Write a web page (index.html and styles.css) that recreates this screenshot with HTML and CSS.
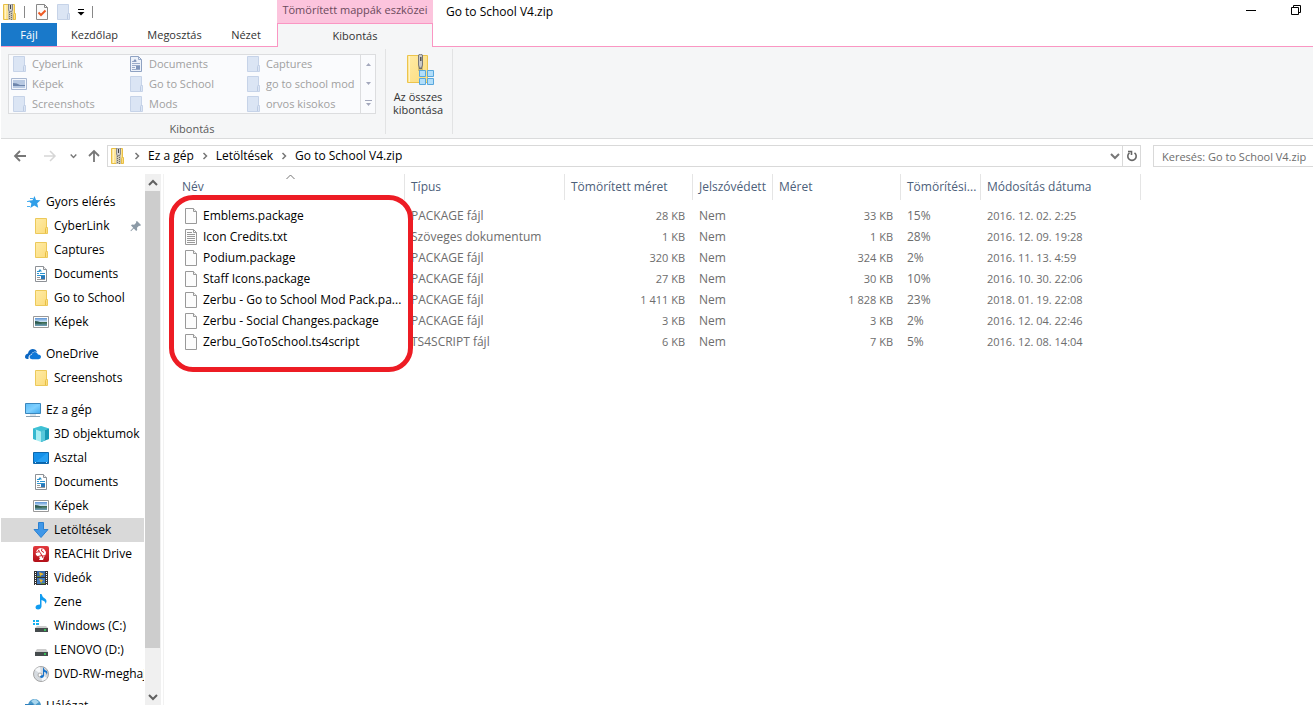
FILE: index.html
```html
<!DOCTYPE html>
<html lang="hu">
<head>
<meta charset="utf-8">
<title>Go to School V4.zip</title>
<link rel="stylesheet" href="styles.css">
</head>
<body>
<svg class="sprite" aria-hidden="true">
  <defs>
    <linearGradient id="g-folder" x1="0" y1="0" x2="1" y2="1"><stop offset="0" stop-color="#ffeba6"/><stop offset="1" stop-color="#fbdc7c"/></linearGradient>
    <linearGradient id="g-screen" x1="0" y1="0" x2="1" y2="1"><stop offset="0" stop-color="#5cbcf7"/><stop offset=".5" stop-color="#7fd0ff"/><stop offset="1" stop-color="#3ea9ee"/></linearGradient>
    <linearGradient id="g-photo" x1="0" y1="0" x2="0" y2="1"><stop offset="0" stop-color="#5b93d6"/><stop offset=".5" stop-color="#d5e8f5"/><stop offset=".55" stop-color="#3d6a4c"/><stop offset="1" stop-color="#6f9fc0"/></linearGradient>
    <linearGradient id="g-red" x1="0" y1="0" x2="0" y2="1"><stop offset="0" stop-color="#e33a3e"/><stop offset="1" stop-color="#b20f18"/></linearGradient>
  </defs>
  <symbol id="folder" viewBox="0 0 16 16"><path d="M2.500.5h11v9h1v6h-12z" fill="url(#g-folder)" stroke="#ecc95a"/><path d="M12.500 15v-4.500l1-1.500" fill="none" stroke="#e8bf45"/></symbol>
  <symbol id="folder-dim" viewBox="0 0 16 16"><path d="M2.500.5h11v9h1v6h-12z" fill="#dbe5f4" stroke="#c6d3e8"/><path d="M12.500 15v-4.500l1-1.500" fill="none" stroke="#bccbe3"/></symbol>
  <symbol id="zip" viewBox="0 0 16 16"><path d="M1.500.5h11v9h1v6h-12z" fill="url(#g-folder)" stroke="#e8bf45"/><path d="M3.500 1v14" stroke="#fff3c8"/><path d="M11.500 15v-4.500l1-1.500" fill="none" stroke="#e8bf45"/><path d="M6 0h5v16h-5z" fill="#c9c3ae"/><path d="M7.500 6v10" stroke="#6e6e6e" stroke-dasharray="1 1"/><path d="M9.500 7v9" stroke="#6e6e6e" stroke-dasharray="1 1"/><path d="M6.500 0h4v6l-1 1.500h-2l-1-1.500z" fill="#d0d0d0" stroke="#8a8a8a"/><path d="M8 1h1v4h-1z" fill="#444"/></symbol>
  <symbol id="check-doc" viewBox="0 0 14 16"><path d="M1.500.5h8l3 3v12h-11z" fill="#fafafa" stroke="#888"/><path d="M9.500.5v3h3" fill="none" stroke="#888"/><path d="M3.500 8.500l2.500 2.500 4.500-4.500" fill="none" stroke="#ee5a24" stroke-width="2"/></symbol>
  <symbol id="doc" viewBox="0 0 16 16"><path d="M2.500.5h8l3 3v12h-11z" fill="#fff" stroke="#8d9196"/><path d="M10.500.5v3h3" fill="#eee" stroke="#8d9196"/><path d="M4 5.500h3M4 7.500h2M7 7.500h5M4 9.500h8" stroke="#2c93cf"/><path d="M7 3l2 2.500h-4z" fill="#2c93cf"/><path d="M4 11.500h3M4 13.500h8" stroke="#999"/><path d="M8 10h4v3h-4z" fill="#2b78b8"/></symbol>
  <symbol id="doc-dim" viewBox="0 0 16 16"><path d="M2.500.5h8l3 3v12h-11z" fill="#edf2fa" stroke="#8fa2c2"/><path d="M10.500.5v3h3M4 5.500h4M4 7.500h8M4 9.500h8M4 11.500h3M4 13.500h8" fill="none" stroke="#9aabc9"/><path d="M7 3l2 2.500h-4zM8 10h4v3h-4z" fill="#7f95bb"/></symbol>
  <symbol id="photo" viewBox="0 0 16 16"><path d="M.5 2.500h15v11h-15z" fill="#fff" stroke="#999"/><path d="M2 4h12v8h-12z" fill="url(#g-photo)"/><path d="M2 7q5 0 7 2.500h-7z" fill="#2c5a50"/></symbol>
  <symbol id="photo-dim" viewBox="0 0 16 16"><path d="M.5 2.500h15v11h-15z" fill="#f2f6fc" stroke="#a9b8d2"/><path d="M2 4h12v8h-12z" fill="#b8c9e2"/><path d="M2 7q4 0 7 2h5v1h-12z" fill="#6e86ac"/></symbol>
  <symbol id="star" viewBox="0 0 16 16"><path d="M9.500 2l1.500 4 4.500.3-3.300 3 1 4.500-3.900-2.300-4 2.500 1.100-4.500-3.200-2.700 4.300-.5z" fill="#2f9ee8"/><path d="M2 7.500h3M2 12.500h3M5 4.500h3" stroke="#4db0f0"/></symbol>
  <symbol id="cloud" viewBox="0 0 16 16"><path d="M0 11q0-3 3-3.500.5-4 4.500-4.500 3.500 0 4.500 3-4-1.500-6 2.500-3 .5-2.500 4.500-3.500 0-3.500-2z" fill="#0a66c2"/><path d="M4.500 11q0-2 2.200-2.300.5-2.700 3.300-2.700 2.300 0 3 2.500 3 .2 3 2.500 0 2-2.500 2.200h-6.500q-2.500-.2-2.500-2.200z" fill="#0f78d8"/></symbol>
  <symbol id="pc" viewBox="0 0 16 16"><path d="M.5 1.500h15v10h-15z" fill="url(#g-screen)" stroke="#3b87bd"/><path d="M5 12h6v2h-6z" fill="#d8e4ec"/><path d="M1 14.500h14" stroke="#8ba0b0"/></symbol>
  <symbol id="cube" viewBox="0 0 16 16"><path d="M8 0l8 2.500v10.500l-8 3-8-3v-10.500z" fill="#a8edf2"/><path d="M0 2.500l3 1v10.500l-3-1z" fill="#35b8cf"/><path d="M8 0l8 2.500-8 3-8-3z" fill="#3fc0d4"/><path d="M8 5.500l8-3v10.500l-8 3z" fill="#1799b5"/><path d="M8 5.500l4-1.500v10.500l-4 1.500z" fill="#57c8db"/></symbol>
  <symbol id="desktop" viewBox="0 0 16 16"><path d="M.5 2.500h15v11h-15z" fill="#1591ea" stroke="#0d68ae"/><path d="M3 12l11-9h1v9z" fill="#27a0f2"/><path d="M1 12.500h14" stroke="#0865ad"/><path d="M2 12.500h1M13 12.500h1" stroke="#cfe8fb"/></symbol>
  <symbol id="down" viewBox="0 0 16 16"><path d="M5.500.5h5v7h4.500l-7 8-7-8h4.500z" fill="#3f97e8" stroke="#2b80d0"/></symbol>
  <symbol id="reach" viewBox="0 0 16 16"><path d="M2 0h12q2 0 2 2v12q0 2-2 2h-12q-2 0-2-2v-12q0-2 2-2z" fill="url(#g-red)"/><path d="M5 3q3-2 6 0l2 3q.5 3-2 5l-1 3h-4l1-2-4-3q-1-3 2-6z" fill="#fff"/><path d="M3 6.500q4-2 5 1.500t5 1M9 2.500q-2 3 2 4M5 10.500l4-1 1 2.500M5 4l2 1.500" fill="none" stroke="#d02027"/></symbol>
  <symbol id="film" viewBox="0 0 16 16"><path d="M1 1h14v14h-14z" fill="#333"/><path d="M2.500 2v13M13.500 2v13" stroke="#fff" stroke-dasharray="1 1"/><path d="M4 1h8v6h-8z" fill="#3569ad"/><path d="M4 8h8v6h-8z" fill="#427abb"/><path d="M6 2l5 2-4 2zM6 9l4 1-2 3z" fill="#e9b42d"/><path d="M4 6h4v1h-4zM8 13h4v1h-4z" fill="#609241"/></symbol>
  <symbol id="note" viewBox="0 0 16 16"><path d="M7 0h1.500q.5 3 4 5 2 2 0 5 .2-3-4-4v6.500q-.5 3-3.500 3-2.500 0-2.500-2 0-3 4.500-3z" fill="#119cf0"/></symbol>
  <symbol id="drive" viewBox="0 0 16 16"><path d="M4 7h9l2 3h-13z" fill="#ccc"/><path d="M2 10h13v4h-13z" fill="#454b4d"/><path d="M11 12h2" stroke="#35e35d" stroke-width="1.500"/></symbol>
  <symbol id="drive-win" viewBox="0 0 16 16"><path d="M4 8h9l2 2h-13z" fill="#ccc"/><path d="M2 10h13v4h-13z" fill="#454b4d"/><path d="M11 12h2" stroke="#35e35d" stroke-width="1.500"/><path d="M0 2h2v2h-2zM3 2h3v2h-3zM0 5h2v2h-2zM3 5h3v2h-3z" fill="#16b1f0"/></symbol>
  <symbol id="disc" viewBox="0 0 16 16"><circle cx="8" cy="8" r="7.500" fill="#d6dbe0" stroke="#a5a5a5"/><path d="M8 8l-6-4q2-3 5-3zM8 8l6 4q-2 3-5 3z" fill="#f6f8fa"/><circle cx="7" cy="9" r="2" fill="#fff" stroke="#aaa"/><path d="M10 1q1 3 4 4 1 2-.5 4 .2-3-2.500-3v4q-.5 2-2.500 2-1.500-.2-1.500-1.500.5-1.500 3-1.500z" fill="#1773cb"/></symbol>
  <symbol id="net" viewBox="0 0 16 16"><circle cx="9.500" cy="7.500" r="6.500" fill="#4a98c8"/><path d="M6 3l4-2 4 3-4 3z" fill="#a9d6ee"/><path d="M0 6h8v6h-8z" fill="#2f80bd"/></symbol>
  <symbol id="file" viewBox="0 0 14 16"><path d="M1.500.5h8l3 3v12h-11z" fill="#fcfcfc" stroke="#999"/><path d="M9.500.5v3h3" fill="#eee" stroke="#999"/></symbol>
  <symbol id="text-file" viewBox="0 0 14 16"><path d="M1.500.5h8l3 3v12h-11z" fill="#fcfcfc" stroke="#999"/><path d="M9.500.5v3h3M3 3.500h5M3 5.500h8M3 7.500h8M3 9.500h8M3 11.500h8M3 13.500h8" fill="none" stroke="#999"/></symbol>
  <symbol id="pin" viewBox="0 0 12 12"><path d="M7 1l4 4-1 1-1-.3-2 2 .2 2.300-1 1-2.400-2.500-2.800 2.800-.6-.6 2.800-2.900-2.200-2.300 1-1 2.200.2 2-2-.3-1z" fill="#8c9aa6"/></symbol>
  <symbol id="chev" viewBox="0 0 8 8"><path d="M2.500 1l3 3-3 3" fill="none" stroke="#777" stroke-width="1.500"/></symbol>
  <symbol id="chev-down" viewBox="0 0 10 8"><path d="M1 2l4 4 4-4" fill="none" stroke="currentColor" stroke-width="2"/></symbol>
  <symbol id="chev-up" viewBox="0 0 10 8"><path d="M1 6l4-4 4 4" fill="none" stroke="currentColor" stroke-width="2"/></symbol>
</svg>

<header class="top">
  <div class="top-left">
    <div class="quick">
      <svg class="i16"><use href="#zip"/></svg>
      <span class="bar"></span>
      <button class="plain" aria-label="Tulajdonságok"><svg class="i14"><use href="#check-doc"/></svg></button>
      <button class="plain" aria-label="Új mappa"><svg class="i16"><use href="#folder-dim"/></svg></button>
      <button class="plain" aria-label="Gyorselérési eszköztár"><svg width="8" height="8" viewBox="0 0 8 8"><path d="M1 1.500h6" stroke="#000"/><path d="M.5 4h7L4 7.500z"/></svg></button>
      <span class="bar"></span>
    </div>
    <nav class="tabs">
      <button class="tab tab-file">Fájl</button>
      <button class="tab tab-home">Kezdőlap</button>
      <button class="tab tab-share">Megosztás</button>
      <button class="tab tab-view">Nézet</button>
    </nav>
  </div>
  <div class="context">
    <div class="context-title">Tömörített mappák eszközei</div>
    <button class="context-tab">Kibontás</button>
  </div>
  <div class="title-area">
    <h1 class="title">Go to School V4.zip</h1>
    <div class="window-buttons">
      <button class="plain" aria-label="Kis méret"><svg width="12" height="12" viewBox="0 0 12 12"><path d="M1 6.500h10" stroke="#000"/></svg></button>
      <button class="plain" aria-label="Előző méret"><svg width="12" height="12" viewBox="0 0 12 12"><path d="M1.500 3.500h7v7h-7zM3.500 3v-1.500h7v7h-2" fill="none" stroke="#000"/></svg></button>
    </div>
  </div>
</header>

<section class="ribbon">
  <div class="group group-extract">
    <div class="gallery">
      <div class="gallery-items">
        <button class="place" disabled><svg class="i16"><use href="#folder-dim"/></svg>CyberLink</button>
        <button class="place" disabled><svg class="i16"><use href="#doc-dim"/></svg>Documents</button>
        <button class="place" disabled><svg class="i16"><use href="#folder-dim"/></svg>Captures</button>
        <button class="place" disabled><svg class="i16"><use href="#photo-dim"/></svg>Képek</button>
        <button class="place" disabled><svg class="i16"><use href="#folder-dim"/></svg>Go to School</button>
        <button class="place" disabled><svg class="i16"><use href="#folder-dim"/></svg>go to school mod</button>
        <button class="place" disabled><svg class="i16"><use href="#folder-dim"/></svg>Screenshots</button>
        <button class="place" disabled><svg class="i16"><use href="#folder-dim"/></svg>Mods</button>
        <button class="place" disabled><svg class="i16"><use href="#folder-dim"/></svg>orvos kisokos</button>
      </div>
      <div class="gallery-scroll">
        <button class="plain" disabled aria-label="Fel"><svg width="7" height="7" viewBox="0 0 7 7"><path d="M1 5h5L3.500 2z" fill="#a3a8bc"/></svg></button>
        <button class="plain" disabled aria-label="Le"><svg width="7" height="7" viewBox="0 0 7 7"><path d="M1 2h5L3.500 5z" fill="#a3a8bc"/></svg></button>
        <button class="plain" disabled aria-label="Több"><svg width="7" height="7" viewBox="0 0 7 7"><path d="M0 .5h7" stroke="#a3a8bc"/><path d="M1 3h5L3.500 6z" fill="#a3a8bc"/></svg></button>
      </div>
    </div>
    <div class="group-label">Kibontás</div>
  </div>
  <div class="group group-all">
    <button class="big">
      <svg width="32" height="32" viewBox="0 0 32 32"><path d="M5.500 1.500h20v27h-20z" fill="url(#g-folder)" stroke="#ecc44c"/><path d="M7.500 2v26" stroke="#fff3c8"/><path d="M16 1h5v16h-5z" fill="#d2bd75"/><path d="M18.500 12v6" stroke="#666" stroke-width="3" stroke-dasharray="1 1"/><path d="M16.500 1q2-1.500 4 0v10l-1 3h-2l-1-3z" fill="#c8c8c8" stroke="#777"/><path d="M18 3h1.500v4h-1.500z" fill="#555"/><g fill="#b2defa" stroke="#58a7dc"><path d="M17.500 16.500h6v6h-6zM25.500 16.500h6v6h-6zM17.500 24.500h6v6h-6zM25.500 24.500h6v6h-6z"/></g></svg>
      <span>Az összes<br>kibontása</span>
    </button>
  </div>
</section>

<div class="navbar">
  <div class="nav-buttons">
    <button class="plain" aria-label="Vissza"><svg width="14" height="14" viewBox="0 0 14 14"><path d="M13 7H2M7 2L2 7l5 5" fill="none" stroke="#777" stroke-width="1.800"/></svg></button>
    <button class="plain" aria-label="Előre" disabled><svg width="14" height="14" viewBox="0 0 14 14"><path d="M1 7h11M7 2l5 5-5 5" fill="none" stroke="#d6d6d6" stroke-width="1.500"/></svg></button>
    <button class="plain recent" aria-label="Legutóbbi helyek"><svg width="7" height="6" viewBox="0 0 10 8"><use href="#chev-down"/></svg></button>
    <button class="plain" aria-label="Fel"><svg width="14" height="14" viewBox="0 0 14 14"><path d="M7 13V2M2 7l5-5 5 5" fill="none" stroke="#777" stroke-width="1.800"/></svg></button>
  </div>
  <div class="address">
    <svg class="i16"><use href="#zip"/></svg>
    <svg class="i8"><use href="#chev"/></svg>
    <a href="#">Ez a gép</a>
    <svg class="i8"><use href="#chev"/></svg>
    <a href="#">Letöltések</a>
    <svg class="i8"><use href="#chev"/></svg>
    <a href="#">Go to School V4.zip</a>
    <button class="plain addr-open" aria-label="Előző helyek"><svg width="10" height="8"><use href="#chev-down"/></svg></button>
    <button class="plain addr-refresh" aria-label="Frissítés"><svg width="12" height="12" viewBox="0 0 12 12"><path d="M8.500 2.800a4.200 4.200 0 1 1-5 0M2 1.500h3.500V5" fill="none" stroke="#666" stroke-width="1.600"/></svg></button>
  </div>
  <input class="search" type="text" aria-label="Keresés" placeholder="Keresés: Go to School V4.zip">
</div>

<div class="body">
  <nav class="tree">
    <div class="tree-group">
      <a class="node root" href="#"><svg class="i16"><use href="#star"/></svg>Gyors elérés</a>
      <a class="node" href="#"><svg class="i16"><use href="#folder"/></svg>CyberLink<svg class="pin" width="12" height="12"><use href="#pin"/></svg></a>
      <a class="node" href="#"><svg class="i16"><use href="#folder"/></svg>Captures</a>
      <a class="node" href="#"><svg class="i16"><use href="#doc"/></svg>Documents</a>
      <a class="node" href="#"><svg class="i16"><use href="#folder"/></svg>Go to School</a>
      <a class="node" href="#"><svg class="i16"><use href="#photo"/></svg>Képek</a>
    </div>
    <div class="tree-group">
      <a class="node root" href="#"><svg class="i16"><use href="#cloud"/></svg>OneDrive</a>
      <a class="node" href="#"><svg class="i16"><use href="#folder"/></svg>Screenshots</a>
    </div>
    <div class="tree-group">
      <a class="node root" href="#"><svg class="i16"><use href="#pc"/></svg>Ez a gép</a>
      <a class="node" href="#"><svg class="i16"><use href="#cube"/></svg>3D objektumok</a>
      <a class="node" href="#"><svg class="i16"><use href="#desktop"/></svg>Asztal</a>
      <a class="node" href="#"><svg class="i16"><use href="#doc"/></svg>Documents</a>
      <a class="node" href="#"><svg class="i16"><use href="#photo"/></svg>Képek</a>
      <a class="node selected" href="#"><svg class="i16"><use href="#down"/></svg>Letöltések</a>
      <a class="node" href="#"><svg class="i16"><use href="#reach"/></svg>REACHit Drive</a>
      <a class="node" href="#"><svg class="i16"><use href="#film"/></svg>Videók</a>
      <a class="node" href="#"><svg class="i16"><use href="#note"/></svg>Zene</a>
      <a class="node" href="#"><svg class="i16"><use href="#drive-win"/></svg>Windows (C:)</a>
      <a class="node" href="#"><svg class="i16"><use href="#drive"/></svg>LENOVO (D:)</a>
      <a class="node" href="#"><svg class="i16"><use href="#disc"/></svg>DVD-RW-meghaj</a>
    </div>
    <div class="tree-group">
      <a class="node root" href="#"><svg class="i16"><use href="#net"/></svg>Hálózat</a>
    </div>
  </nav>
  <div class="scrollbar">
    <button class="plain" aria-label="Görgetés fel"><svg width="10" height="8"><use href="#chev-up"/></svg></button>
    <div class="track"><div class="thumb"></div></div>
    <button class="plain" aria-label="Görgetés le"><svg width="10" height="8"><use href="#chev-down"/></svg></button>
  </div>
  <main class="files">
    <table>
      <colgroup><col class="c-name"><col class="c-type"><col class="c-size"><col class="c-flag"><col class="c-size"><col class="c-flag"><col class="c-type"></colgroup>
      <thead>
        <tr><th class="name">Név<svg class="sort" width="9" height="6" viewBox="0 0 9 6"><path d="M.5 5l4-4 4 4" fill="none" stroke="#777"/></svg></th><th>Típus</th><th>Tömörített méret</th><th>Jelszóvédett</th><th>Méret</th><th>Tömörítési...</th><th>Módosítás dátuma</th></tr>
      </thead>
      <tbody>
        <tr><td class="name"><svg class="i14"><use href="#file"/></svg>Emblems.package</td><td>PACKAGE fájl</td><td class="num">28 KB</td><td>Nem</td><td class="num">33 KB</td><td>15%</td><td class="date">2016. 12. 02. 2:25</td></tr>
        <tr><td class="name"><svg class="i14"><use href="#text-file"/></svg>Icon Credits.txt</td><td>Szöveges dokumentum</td><td class="num">1 KB</td><td>Nem</td><td class="num">1 KB</td><td>28%</td><td class="date">2016. 12. 09. 19:28</td></tr>
        <tr><td class="name"><svg class="i14"><use href="#file"/></svg>Podium.package</td><td>PACKAGE fájl</td><td class="num">320 KB</td><td>Nem</td><td class="num">324 KB</td><td>2%</td><td class="date">2016. 11. 13. 4:59</td></tr>
        <tr><td class="name"><svg class="i14"><use href="#file"/></svg>Staff Icons.package</td><td>PACKAGE fájl</td><td class="num">27 KB</td><td>Nem</td><td class="num">30 KB</td><td>10%</td><td class="date">2016. 10. 30. 22:06</td></tr>
        <tr><td class="name"><svg class="i14"><use href="#file"/></svg>Zerbu - Go to School Mod Pack.pa...</td><td>PACKAGE fájl</td><td class="num">1 411 KB</td><td>Nem</td><td class="num">1 828 KB</td><td>23%</td><td class="date">2018. 01. 19. 22:08</td></tr>
        <tr><td class="name"><svg class="i14"><use href="#file"/></svg>Zerbu - Social Changes.package</td><td>PACKAGE fájl</td><td class="num">3 KB</td><td>Nem</td><td class="num">3 KB</td><td>2%</td><td class="date">2016. 12. 04. 22:46</td></tr>
        <tr><td class="name"><svg class="i14"><use href="#file"/></svg>Zerbu_GoToSchool.ts4script</td><td>TS4SCRIPT fájl</td><td class="num">6 KB</td><td>Nem</td><td class="num">7 KB</td><td>5%</td><td class="date">2016. 12. 08. 14:04</td></tr>
      </tbody>
    </table>
    <div class="marker"></div>
  </main>
</div>
</body>
</html>
```
FILE: styles.css
```css
* { box-sizing: border-box; }
html { height: 100%; }
body {
  margin: 0;
  padding: 0 0 3px 1px;
  height: 100%;
  display: flex;
  flex-direction: column;
  overflow: hidden;
  background: #fff;
  color: #000;
  font: 12px/16px "Open Sans", "Noto Sans", sans-serif;
}
button, input { font: inherit; color: inherit; margin: 0; border-radius: 0; }
button { padding: 0; border: 0; background: none; white-space: nowrap; }
a { color: inherit; text-decoration: none; }
svg { display: block; flex: none; }
.sprite { position: absolute; width: 0; height: 0; }
.plain { display: flex; align-items: center; justify-content: center; }
.i16 { width: 16px; height: 16px; }
.i14 { width: 14px; height: 16px; }
.i8 { width: 8px; height: 8px; }

.top { display: flex; flex: none; height: 47px; font-size: 11px; }
.top-left { flex: none; width: 276px; display: flex; flex-direction: column; border-bottom: 1px solid #fa96c3; }
.quick { height: 23px; display: flex; align-items: center; padding-left: 1px; }
.quick .bar { width: 1px; height: 12px; background: #888; margin: 0 10px 0 6px; }
.quick .plain { margin-right: 6px; }
.quick .plain + .bar { margin-left: 1px; }
.tabs { display: flex; flex: 1; }
.tab { color: #333; }
.tab-file { width: 56px; background: #1979ca; color: #fff; }
.tab-home { width: 75px; }
.tab-share { width: 85px; }
.tab-view { width: 58px; }
.context { flex: none; width: 156px; display: flex; flex-direction: column; }
.context-title { height: 23px; padding-top: 2px; background: #fcc4dd; color: #6b4a5c; text-align: center; white-space: nowrap; }
.context-tab { flex: 1; border: 1px solid #fa96c3; border-bottom: 0; background: #f5f6f7; color: #333; }
.title-area { flex: 1; display: flex; justify-content: space-between; border-bottom: 1px solid #fa96c3; }
.title { margin: 4px 0 0 13px; font-size: 12px; font-weight: 400; white-space: nowrap; }
.window-buttons { display: flex; gap: 33px; height: 20px; padding-right: 11px; }

.ribbon { flex: none; display: flex; height: 92px; padding: 2px 0 4px; background: #f5f6f7; border-bottom: 1px solid #dadbdc; font-size: 11px; }
.group { border-right: 1px solid #e2e3e4; }
.group-extract { padding: 5px 9px 0 7px; }
.gallery { display: flex; width: 368px; height: 60px; border: 1px solid #dcdddf; background: #fafbfd; }
.gallery-items { flex: 1; display: grid; grid-template-columns: repeat(3, 117px); grid-template-rows: repeat(3, 20px); align-items: center; align-content: center; }
.place { display: flex; align-items: center; gap: 5px; padding-left: 2px; color: #a0a0a0; }
.gallery-scroll { width: 15px; flex: none; display: grid; grid-template-rows: repeat(3, 1fr); border-left: 1px solid #dcdddf; }
.group-label { margin-top: 7px; text-align: center; color: #5a5a5a; }
.group-all { width: 67px; }
.big { width: 64px; padding-top: 5px; line-height: 13px; color: #333; display: flex; flex-direction: column; align-items: center; gap: 4px; }

.navbar { flex: none; display: flex; align-items: center; height: 35px; padding-bottom: 1px; }
.nav-buttons { width: 106px; display: flex; align-items: center; gap: 16px; padding-left: 12px; color: #777; }
.nav-buttons .recent { margin: 0 -6px 0 -3px; }
.address { flex: 1; display: flex; align-items: center; height: 22px; gap: 7px; padding-left: 2px; border: 1px solid #d9d9d9; white-space: nowrap; }
.addr-open { margin-left: auto; margin-right: -5px; color: #777; }
.addr-refresh { width: 18px; height: 20px; border-left: 1px solid #d9d9d9; }
.search { flex: none; width: 160px; height: 22px; margin-left: 12px; padding: 0 0 0 8px; border: 1px solid #d9d9d9; border-right: 0; background: #fff; font-size: 11px; }
.search::placeholder { color: #6d6d6d; opacity: 1; }

.body { flex: 1; min-height: 0; display: flex; }
.tree { flex: none; width: 143px; padding-top: 16px; overflow: hidden; }
.tree-group { margin-bottom: 8px; }
.node { display: flex; align-items: center; gap: 5px; height: 24px; padding-left: 32px; white-space: nowrap; }
.node.root { padding-left: 24px; }
.node.selected { background: #d9d9d9; }
.pin { margin-left: auto; margin-right: 2px; }
.scrollbar { flex: none; width: 16px; margin-left: 1px; display: flex; flex-direction: column; background: #f0f0f0; color: #606060; }
.scrollbar .plain { height: 17px; }
.track { flex: 1; }
.thumb { width: 15px; height: 92%; background: #cdcdcd; }
.files { flex: 1; position: relative; margin-left: 2px; border-left: 1px solid #f2f2f2; }
table { width: 977px; table-layout: fixed; border-collapse: separate; border-spacing: 0; }
.c-name { width: 241px; }
.c-type { width: 160px; }
.c-size { width: 128px; }
.c-flag { width: 80px; }
th, td { padding: 0 8px 0 6px; text-align: left; font-weight: 400; white-space: nowrap; }
th { height: 26px; border-right: 1px solid #e5e5e5; color: #4c607a; padding-right: 0; }
th.name { padding-left: 18px; }
tbody::before { content: ""; display: block; height: 5px; }
td { height: 21px; color: #6d6d6d; }
td.name { display: flex; align-items: center; gap: 5px; padding-left: 20px; color: #000; }
td.num { text-align: right; }
td.num, td.date { font-size: 11px; }
.sort { position: absolute; left: 122px; top: 0; }
.marker { position: absolute; left: 5px; top: 21px; width: 244px; height: 177px; border: 5px solid #ed1c24; border-radius: 24px; pointer-events: none; }
```
